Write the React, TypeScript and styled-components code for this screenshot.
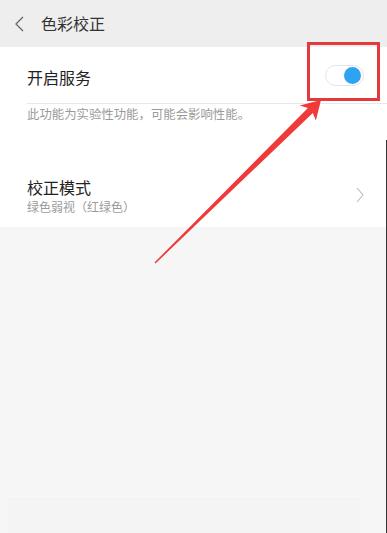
import React from "react";
import styled, { createGlobalStyle } from "styled-components";

const Global = createGlobalStyle`
  html, body { margin: 0; padding: 0; }
  body {
    width: 387px;
    height: 533px;
    overflow: hidden;
    background: #f6f6f6;
    font-family: "Noto Sans CJK SC", "Noto Sans", sans-serif;
  }
`;

const Page = styled.div`
  position: relative;
  width: 387px;
  height: 533px;
  display: flex;
  flex-direction: column;
  background: #f6f6f6;
`;

const Header = styled.div`
  height: 47px;
  display: flex;
  align-items: center;
  background: #eeeeee;
  padding-left: 14px;
  gap: 15px;
  box-sizing: border-box;
`;

const Title = styled.div`
  font-size: 16px;
  color: #333;
  line-height: 20px;
  margin-top: -1px;
`;

const Section = styled.div`
  background: #ffffff;
  padding-left: 27px;
  display: flex;
  flex-direction: column;
`;

const SwitchRow = styled.div`
  height: 56px;
  display: flex;
  align-items: center;
  justify-content: space-between;
  padding-right: 23px;
  border-bottom: 1px solid #e8e8e8;
`;

const RowLabel = styled.div<{ $top?: number }>`
  font-size: 16px;
  color: #222;
  line-height: 20px;
  padding-top: ${(p) => p.$top ?? 0}px;
`;

const Track = styled.div`
  width: 39px;
  height: 21px;
  box-sizing: border-box;
  border: 1px solid #e4e4e4;
  border-radius: 11px;
  background: #fff;
  display: flex;
  align-items: center;
  justify-content: flex-end;
  padding-right: 2px;
  margin-top: 1px;
`;

const Knob = styled.div`
  width: 17px;
  height: 17px;
  border-radius: 50%;
  background: #2ea3f2;
`;

const Desc = styled.div`
  font-size: 12.4px;
  color: #9a9a9a;
  line-height: 20px;
  padding: 0 0 33px;
`;

const ModeRow = styled.div`
  height: 70px;
  display: flex;
  align-items: flex-start;
  justify-content: space-between;
  padding: 20px 23px 0 0;
  box-sizing: border-box;
`;

const ModeText = styled.div`
  display: flex;
  flex-direction: column;
`;

const ModeSub = styled.div`
  font-size: 12px;
  color: #9a9a9a;
  line-height: 18px;
  padding-top: 1px;
`;

const Chevron = styled.svg`
  margin-top: 10px;
`;

const Rest = styled.div`
  flex: 1;
  display: flex;
  flex-direction: column;
  justify-content: flex-end;
`;

const FooterBox = styled.div`
  height: 36px;
  margin: 0 27px 0 8px;
  background: #f4f4f4;
  border-top: 1px solid #f8f8f8;
`;

const EdgeLine = styled.div`
  position: absolute;
  right: 0;
  top: 140px;
  bottom: 0;
  width: 1px;
  background: #333;
`;

const Overlay = styled.svg`
  position: absolute;
  left: 0;
  top: 0;
  pointer-events: none;
`;

export default function App() {
  return (
    <>
      <Global />
      <Page>
        <Header>
          <svg width="12" height="16" viewBox="0 0 12 16">
            <polyline points="9,1 2,8 9,15" fill="none" stroke="#666" strokeWidth="1.3" />
          </svg>
          <Title>色彩校正</Title>
        </Header>
        <Section>
          <SwitchRow>
            <RowLabel $top={3}>开启服务</RowLabel>
            <Track>
              <Knob />
            </Track>
          </SwitchRow>
          <Desc>此功能为实验性功能，可能会影响性能。</Desc>
          <ModeRow>
            <ModeText>
              <RowLabel>校正模式</RowLabel>
              <ModeSub>绿色弱视（红绿色）</ModeSub>
            </ModeText>
            <Chevron width="8" height="16" viewBox="0 0 8 16">
              <polyline points="1,1 7,8 1,15" fill="none" stroke="#bbb" strokeWidth="1.1" />
            </Chevron>
          </ModeRow>
        </Section>
        <Rest>
          <FooterBox />
        </Rest>
        <EdgeLine />
        <Overlay width="387" height="533" viewBox="0 0 387 533">
          <rect x="308.5" y="43.5" width="70" height="56" fill="none" stroke="#e53a3d" strokeWidth="3" />
          <polygon
            points="321,100 315.9,120.4 312.8,113 155.5,263.5 154.5,262.5 307.9,108 299.8,105.5"
            fill="#f03a3a"
          />
        </Overlay>
      </Page>
    </>
  );
}
